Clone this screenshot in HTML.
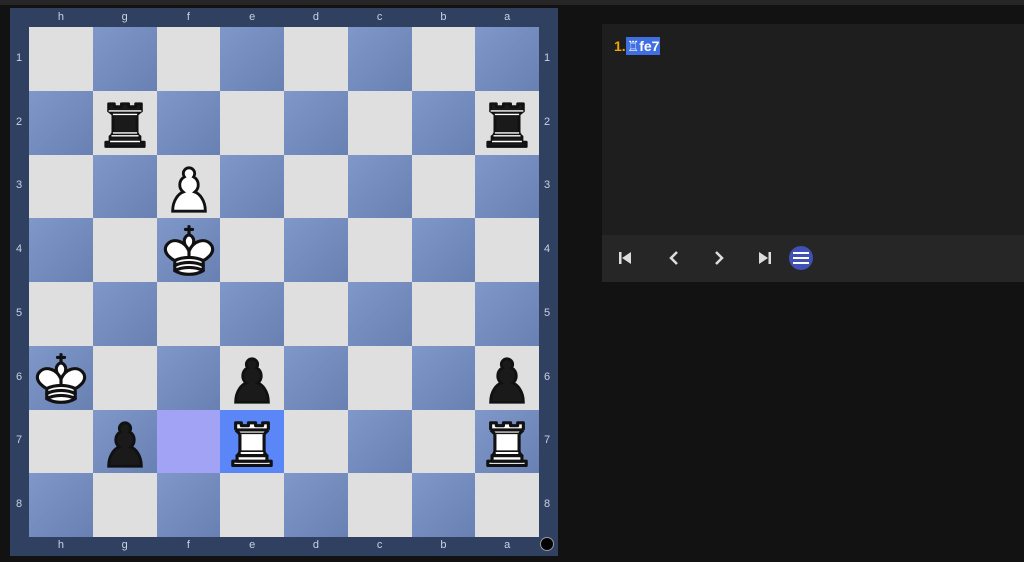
<!DOCTYPE html><html><head><style>
body{margin:0;width:1024px;height:562px;background:#121212;position:relative;overflow:hidden;font-family:"Liberation Sans","DejaVu Sans",sans-serif}
.top{position:absolute;left:0;top:0;width:1024px;height:5px;background:#262626}
.frame{position:absolute;left:10px;top:8px;width:548px;height:548px;background:#2f4060}
.sq{position:absolute}
.l{background:#dfdfdf}.d{background:linear-gradient(135deg,#7f98c9,#6880b2)}
.lab{position:absolute;color:#c8d2e4;font-size:11px;text-align:center;width:20px}
.p{position:absolute;width:64px;height:64px}
.panel{position:absolute;left:602px;top:24px;width:422px;height:258px;background:#1e1e1e}
.bar{position:absolute;left:0;top:211px;width:422px;height:47px;background:#262626}
</style></head><body>
<div class="top"></div>
<div class="frame"></div>
<div id="b"></div>
<div style="position:absolute;left:540px;top:537px;width:12px;height:12px;border-radius:50%;background:#000;border:1px solid #999"></div>
<div class="panel">
<div style="position:absolute;left:12px;top:14px;font-size:14px;font-weight:bold;color:#f0a500">1.<span style="background:#3f6fe0;color:#fff;padding:1px 1px">♖fe7</span></div>
<div class="bar">
<svg width="422" height="47" style="position:absolute;left:0;top:0">
<g fill="#ddd"><rect x="17" y="17" width="2.5" height="12"/><path d="M20 23 L29 17 V29Z"/>
<path d="M75 17 L69 23 L75 29" stroke="#ddd" stroke-width="2.5" fill="none"/>
<path d="M114 17 L120 23 L114 29" stroke="#ddd" stroke-width="2.5" fill="none"/>
<path d="M157 17 L166 23 L157 29Z"/><rect x="166.5" y="17" width="2.5" height="12"/></g>
<circle cx="199" cy="23" r="12" fill="#3f51b5"/>
<g fill="#fff"><rect x="191" y="17" width="16" height="2"/><rect x="191" y="22" width="16" height="2"/><rect x="191" y="27" width="16" height="2"/></g>
</svg></div></div>
<script>
var h='',f='hgfedcba',s=63.75;
for(var r=0;r<8;r++)for(var c=0;c<8;c++){var x=29+c*s,y=27+r*s,cl=(r+c)%2?'d':'l',bg='';
if(r==6&&c==2)bg='background:#a3a3f5';if(r==6&&c==3)bg='background:#5b86f8';
h+='<div class="sq '+cl+'" style="left:'+Math.round(x)+'px;top:'+Math.round(y)+'px;width:'+(Math.round(x+s)-Math.round(x))+'px;height:'+(Math.round(y+s)-Math.round(y))+'px;'+bg+'"></div>';}
for(var i=0;i<8;i++){var x=29+i*s+s/2-10;
h+='<div class="lab" style="left:'+x+'px;top:11px">'+f[i]+'</div><div class="lab" style="left:'+x+'px;top:539px">'+f[i]+'</div>';
var y=27+i*s+s/2-7;h+='<div class="lab" style="left:9px;top:'+y+'px">'+(i+1)+'</div><div class="lab" style="left:537px;top:'+y+'px">'+(i+1)+'</div>';}
var S={
wr:'<g fill="#fff" stroke="#111" stroke-width="2.2" stroke-linejoin="round"><path d="M9,39L36,39L36,36L9,36z"/><path d="M12,36L12,32L33,32L33,36z"/><path d="M11,14L11,9L15,9L15,11L20,11L20,9L25,9L25,11L30,11L30,9L34,9L34,14"/><path d="M34,14L31,17L14,17L11,14"/><path d="M31,17L31,29.5L14,29.5L14,17"/><path d="M31,29.5L32.5,32L12.5,32L14,29.5"/><path d="M11,14L34,14" fill="none"/></g>',
br:'<g fill="#1a1a1a" stroke="#111" stroke-width="2" stroke-linejoin="round"><path d="M9,39L36,39L36,36L9,36z"/><path d="M12.5,32L14,29.5L31,29.5L32.5,32z"/><path d="M12,36L12,32L33,32L33,36z"/><path d="M14,29.5L14,16.5L31,16.5L31,29.5z"/><path d="M14,16.5L11,14L34,14L31,16.5z"/><path d="M11,14L11,9L15,9L15,11L20,11L20,9L25,9L25,11L30,11L30,9L34,9L34,14z"/></g><g stroke="#fff" stroke-width="1" fill="none"><path d="M12,35.5L33,35.5M13,31.5L32,31.5M14,29.5L31,29.5M14,16.5L31,16.5M11,14L34,14"/></g>',
pawn:'<path d="m22.5,9c-2.21,0-4,1.79-4,4 0,.89.29,1.71.78,2.38C17.33,16.5 16,18.59 16,21c0,2.03.94,3.84 2.41,5.03C15.41,27.09 11,31.58 11,39.5H34C34,31.58 29.59,27.09 26.59,26.03 28.06,24.84 29,23.03 29,21 29,18.59 27.67,16.5 25.72,15.38 26.21,14.71 26.5,13.89 26.5,13c0-2.21-1.79-4-4-4z" stroke="#111" stroke-width="2" stroke-linecap="round" FILL/>',
wk:'<g fill="none" stroke="#111" stroke-width="2.2" stroke-linecap="round" stroke-linejoin="round"><path d="M22.5,11.63V6M20,8H25"/><path d="M22.5,25C22.5,25 27,17.5 25.5,14.5C25.5,14.5 24.5,12 22.5,12C20.5,12 19.5,14.5 19.5,14.5C18,17.5 22.5,25 22.5,25" fill="#fff"/><path d="M12.5,37C18,40.5 27,40.5 32.5,37L32.5,30C32.5,30 41.5,25.5 38.5,19.5C34.5,13 25,16 22.5,23.5L22.5,27L22.5,23.5C20,16 10.5,13 6.5,19.5C3.5,25.5 12.5,30 12.5,30L12.5,37" fill="#fff"/><path d="M12.5,30C18,27 27,27 32.5,30M12.5,33.5C18,30.5 27,30.5 32.5,33.5M12.5,37C18,34 27,34 32.5,37"/></g>'};
S.wp=S.pawn.replace('FILL','fill="#fff"');S.bp=S.pawn.replace('FILL','fill="#1a1a1a"');
var P=[[1,1,'br'],[1,7,'br'],[2,2,'wp'],[3,2,'wk'],[5,0,'wk'],[5,3,'bp'],[5,7,'bp'],[6,1,'bp'],[6,3,'wr'],[6,7,'wr']];
P.forEach(function(p){var x=Math.round(29+p[1]*s),y=Math.round(27+p[0]*s);
h+='<svg class="p" viewBox="0 0 45 45" style="left:'+x+'px;top:'+y+'px">'+S[p[2]]+'</svg>';});
document.getElementById('b').innerHTML=h;
</script>
</body></html>
